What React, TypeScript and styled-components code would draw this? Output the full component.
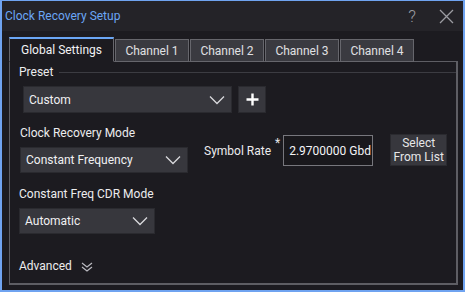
import styled, { createGlobalStyle } from 'styled-components';

const GlobalStyle = createGlobalStyle`
  html, body {
    margin: 0;
    padding: 0;
    background: #1c1b20;
  }
  body {
    font-family: Roboto, "Noto Sans", "Liberation Sans", sans-serif;
    color: #e6e6e8;
  }
`;

const tabs = ['Global Settings', 'Channel 1', 'Channel 2', 'Channel 3', 'Channel 4'];

function Chevron() {
  return (
    <svg width="16" height="10" viewBox="0 0 16 10">
      <polyline points="1,1.5 8,8.5 15,1.5" fill="none" stroke="#d8d8dc" strokeWidth="1.3" />
    </svg>
  );
}

function App() {
  return (
    <Window>
      <GlobalStyle />
      <TitleBar>
        <Title>Clock Recovery Setup</Title>
        <TitleIcons>
          <HelpMark>?</HelpMark>
          <svg width="15" height="15" viewBox="0 0 15 15">
            <path d="M1 1 L14 14 M14 1 L1 14" stroke="#9c9ca2" strokeWidth="1.3" />
          </svg>
        </TitleIcons>
      </TitleBar>
      <Body>
        <TabRow>
          {tabs.map((t, i) => (
            <Tab key={t} $active={i === 0}>
              {t}
            </Tab>
          ))}
        </TabRow>
        <Panel>
          <SectionHead>
            <Label>Preset</Label>
            <Rule />
          </SectionHead>
          <PresetRow>
            <Dropdown $width={209} $height={27}>
              <span>Custom</span>
              <Chevron />
            </Dropdown>
            <PlusButton>
              <svg width="13" height="13" viewBox="0 0 13 13">
                <path d="M6.5 0.5 V12.5 M0.5 6.5 H12.5" stroke="#ffffff" strokeWidth="2.4" />
              </svg>
            </PlusButton>
          </PresetRow>
          <ModeRow>
            <Field>
              <Label>Clock Recovery Mode</Label>
              <Dropdown $width={168} $height={26}>
                <span>Constant Frequency</span>
                <Chevron />
              </Dropdown>
            </Field>
            <RateGroup>
              <RateLabel>Symbol Rate</RateLabel>
              <Asterisk>*</Asterisk>
              <RateInput>2.9700000 Gbd</RateInput>
              <ListButton>
                Select
                <br />
                From List
              </ListButton>
            </RateGroup>
          </ModeRow>
          <Field>
            <Label>Constant Freq CDR Mode</Label>
            <Dropdown $width={136} $height={26}>
              <span>Automatic</span>
              <Chevron />
            </Dropdown>
          </Field>
          <Advanced>
            <Label>Advanced</Label>
            <svg width="12" height="10" viewBox="0 0 12 10">
              <path d="M1 1 L6 5 L11 1 M1 5 L6 9 L11 5" fill="none" stroke="#bcbcc2" strokeWidth="1.2" />
            </svg>
          </Advanced>
        </Panel>
      </Body>
    </Window>
  );
}

const Window = styled.div`
  width: 465px;
  height: 292px;
  box-sizing: border-box;
  border: 2px solid #6fa3f0;
  border-top: 1px solid #6fa3f0;
  display: flex;
  flex-direction: column;
  background: #1c1b20;
  white-space: nowrap;
`;

const TitleBar = styled.div`
  height: 30px;
  flex-shrink: 0;
  background: #242328;
  display: flex;
  align-items: center;
  justify-content: space-between;
  padding: 0 9px 0 3px;
`;

const Title = styled.div`
  color: #6aa6f5;
  font-size: 12px;
`;

const TitleIcons = styled.div`
  display: flex;
  align-items: center;
  gap: 23px;
`;

const HelpMark = styled.span`
  color: #9c9ca2;
  font-size: 17px;
  font-weight: 300;
`;

const Body = styled.div`
  flex: 1;
  padding: 6px 5px 5px 7px;
  display: flex;
  flex-direction: column;
`;

const TabRow = styled.div`
  display: flex;
  gap: 1px;
  height: 25px;
  align-items: flex-end;
  position: relative;
  z-index: 1;
  margin-bottom: -1px;
`;

const Tab = styled.div<{ $active?: boolean }>`
  box-sizing: border-box;
  width: ${(p) => (p.$active ? '105px' : '74px')};
  height: ${(p) => (p.$active ? '25px' : '23px')};
  font-size: 12px;
  display: flex;
  align-items: center;
  justify-content: center;
  background: ${(p) => (p.$active ? '#1c1b20' : '#3a3a40')};
  color: ${(p) => (p.$active ? '#f2f2f4' : '#e0e0e3')};
  border: 1px solid #66666c;
  border-top: ${(p) => (p.$active ? '2px solid #6aa6f5' : '1px solid #66666c')};
  border-bottom: ${(p) => (p.$active ? '1px solid #1c1b20' : '1px solid #66666c')};
`;

const Panel = styled.div`
  flex: 1;
  box-sizing: border-box;
  border: 1px solid #5e5e64;
  border-right-width: 2px;
  border-bottom-width: 2px;
  padding: 3px 10px 0 9px;
  display: flex;
  flex-direction: column;
`;

const SectionHead = styled.div`
  display: flex;
  align-items: center;
  gap: 6px;
  height: 15px;
`;

const Rule = styled.div`
  flex: 1;
  border-bottom: 1px solid #3c3c42;
  margin-right: -10px;
`;

const Label = styled.span`
  font-size: 12px;
  line-height: 15px;
  color: #ececee;
`;

const PresetRow = styled.div`
  display: flex;
  gap: 6px;
  margin: 0 0 0 4px;
`;

const Dropdown = styled.div<{ $width: number; $height: number }>`
  box-sizing: border-box;
  width: ${(p) => p.$width}px;
  height: ${(p) => p.$height}px;
  background: #37373d;
  border: 1px solid #2a2a2f;
  display: flex;
  align-items: center;
  justify-content: space-between;
  padding: 0 6px 0 5px;
  font-size: 12px;
  color: #f0f0f2;
  margin-top: 6px;
`;

const PlusButton = styled.div`
  box-sizing: border-box;
  width: 28px;
  height: 27px;
  margin-top: 6px;
  background: #37373d;
  border: 1px solid #2a2a2f;
  display: flex;
  align-items: center;
  justify-content: center;
`;

const ModeRow = styled.div`
  display: flex;
  align-items: flex-start;
  margin-top: 13px;
  margin-left: 1px;
  gap: 16px;
`;

const Field = styled.div`
  display: flex;
  flex-direction: column;
  margin-bottom: 14px;
`;

const RateGroup = styled.div`
  display: flex;
  align-items: center;
  margin-top: 7px;
  height: 33px;
  flex-shrink: 0;
`;

const RateLabel = styled(Label)`
  margin-top: 4px;
`;

const Asterisk = styled.span`
  font-size: 12px;
  align-self: flex-start;
  margin: 3px 3px 0 4px;
`;

const RateInput = styled.div`
  box-sizing: border-box;
  width: 90px;
  height: 31px;
  border: 1px solid #77777d;
  background: #19181c;
  display: flex;
  align-items: center;
  padding-left: 5px;
  font-size: 12px;
  color: #f4f4f6;
  margin-top: 2px;
`;

const ListButton = styled.div`
  box-sizing: border-box;
  margin-left: 17px;
  width: 57px;
  height: 32px;
  background: #37373d;
  border: 1px solid #2a2a2f;
  font-size: 12px;
  line-height: 14px;
  text-align: center;
  display: flex;
  align-items: center;
  justify-content: center;
`;

const Advanced = styled.div`
  display: flex;
  align-items: center;
  gap: 9px;
  margin-top: 11px;
`;

export default App;
